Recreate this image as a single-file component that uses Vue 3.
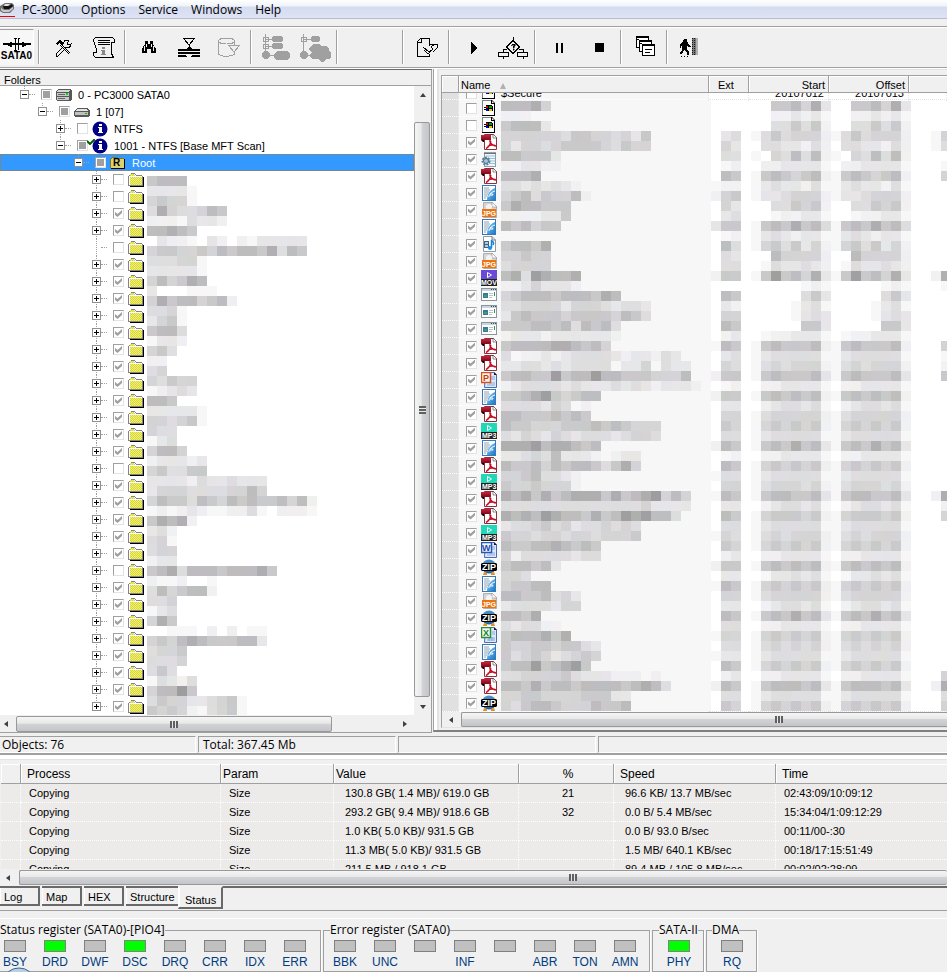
<script setup>
import { h } from 'vue'

const menu = ['PC-3000', 'Options', 'Service', 'Windows', 'Help']

const toolGroups = [
  ['tools', 'script'],
  ['find', 'merge', 'export'],
  ['map-tree', 'map-solid'],
  [],
  ['report'],
  ['play', 'flow'],
  ['pause', 'stop'],
  ['cascade'],
  ['exit'],
]
const toolNames = {
  tools: 'Settings', script: 'Script info', find: 'Find', merge: 'Filter', export: 'Save selection',
  'map-tree': 'Build map', 'map-solid': 'Build full map', report: 'Report', play: 'Start', flow: 'Algorithm',
  pause: 'Pause', stop: 'Stop', cascade: 'Cascade windows', exit: 'Exit',
}

const unchecked = [0, 1, 4, 17, 23]
const tree = [
  { depth: 0, open: true, state: 'mixed', icon: 'drive', text: '0 - PC3000 SATA0' },
  { depth: 1, open: true, state: 'mixed', icon: 'disk', text: '1 [07]' },
  { depth: 2, open: false, state: 'off', icon: 'info', text: 'NTFS', more: true },
  { depth: 2, open: true, state: 'mixed', icon: 'info', text: '1001 - NTFS [Base MFT Scan]', mark: true },
  { depth: 3, open: true, state: 'mixed', icon: 'root', text: 'Root', selected: true },
  ...Array.from({ length: 32 }, (_, i) => ({
    depth: 4, open: false, leaf: i === 4, state: unchecked.includes(i) ? 'off' : 'on',
    icon: 'folder', text: '', more: i < 31,
  })),
]

const fileIcons = ('win win pdf note pdf html jpg html media jpg mov app app app pdf pdf ppt html pdf mp3 html pdf ' +
  'mp3 pdf pdf mp3 word zip html jpg zip xls html pdf pdf zip').split(' ')

// Letters printed on top of a file-type picture: text, x, baseline, size, colour.
const iconLetters = {
  root: ['R', 3, 11, 10, '#000'],
  'f-jpg': ['JPG', 1, 14, 7, '#fff'],
  'f-mov': ['MOV', 0, 15, 7, '#fff'],
  'f-mp3': ['MP3', 1, 15, 7, '#fff'],
  'f-ppt': ['P', 2, 9, 9, '#c83c10'],
  'f-word': ['W', 1, 9, 9, '#1c48a8'],
  'f-xls': ['X', 2, 9, 9, '#18782c'],
  'f-zip': ['ZIP', 1, 11, 9, '#fff'],
}
const Icon = (props) => {
  const l = iconLetters[props.name]
  return h('svg', { width: 16, height: 16, viewBox: '0 0 16 16' }, [
    h('use', { href: '#' + props.name }),
    l && h('text', { x: l[1], y: l[2], 'font-size': l[3], fill: l[4], 'font-family': 'Liberation Sans', 'font-weight': 'bold' }, l[0]),
  ])
}
Icon.props = ['name']

const processes = [
  ['Copying', 'Size', '130.8 GB( 1.4 MB)/ 619.0 GB', '21', '96.6 KB/ 13.7 MB/sec', '02:43:09/10:09:12'],
  ['Copying', 'Size', '293.2 GB( 9.4 MB)/ 918.6 GB', '32', '0.0 B/ 5.4 MB/sec', '15:34:04/1:09:12:29'],
  ['Copying', 'Size', '1.0 KB( 5.0 KB)/ 931.5 GB', '', '0.0 B/ 93.0 B/sec', '00:11/00-:30'],
  ['Copying', 'Size', '11.3 MB( 5.0 KB)/ 931.5 GB', '', '1.5 MB/ 640.1 KB/sec', '00:18/17:15:51:49'],
  ['Copying', 'Size', '211.5 MB / 918.1 GB', '', '89.4 MB / 105.8 MB/sec', '00:02/02:28:09'],
]

const tabs = ['Log', 'Map', 'HEX', 'Structure', 'Status']

const registers = [
  { title: 'Status register (SATA0)-[PIO4]', cls: 'g-status', bits: ['BSY', 'DRD', 'DWF', 'DSC', 'DRQ', 'CRR', 'IDX', 'ERR'], on: ['DRD', 'DSC'] },
  { title: 'Error register (SATA0)', cls: 'g-error', bits: ['BBK', 'UNC', '', 'INF', '', 'ABR', 'TON', 'AMN'], on: [] },
  { title: 'SATA-II', cls: 'g-sata', bits: ['PHY'], on: ['PHY'] },
  { title: 'DMA', cls: 'g-dma', bits: ['RQ'], on: [] },
]

// Masked text is painted as 10px tiles; each digit is a darkness level.
const levels = [255, 247, 239, 229, 220, 211, 200, 188, 174, 157]
const treeMask = `6777
33331
56551
48544576
22214332
77876
0322103202133333
5665565767768476
444551
333331
575687
3000111
586775672
4451
3561
6774
1332
564
22
45
54655
12343
776
333331
554561
544
134
5775
233323
564466
333324334333
355544445575
57664765767667572
12123211224102221
68782
342
451
455
233
6784777677786
2112001
4756772
445
134
586
001110202011
565787666773
4556
4445
464
14324
57796
4655334561
6565214561`.split('\n')
const nameMask = `77785
2221
67773
555555466554536
535545666654655
776663
2233221
7778
443434321
567465572
68776661
22223361
767566
11
67768
55655
45555
78498778
223533321
567776777687
445555355543443
367666566665764
666776747674
233323333332
67777887675
4122323444432332431
3344343444413350433
6776696779776665557
23444434333434323332
6678965677
4444354121
776667676
7665556667676555
4354354344434554
8889788767
33454733321233
76675767764685
55674432
65565552
8786867888686789575
4444444444444453333
878798776867989774
34456453445454
65545545545556
7667787676
5244444344
677673
55411
56677
77667453
34444355
77681
434422
6777868
6556656643
6456534565
677967896
44555564333222121
77686776777767874
5566555566633
5467765557667`.split('\n')
const infoMask = `000 00667583 00
000 00223231 00
000 00446462 00
034 14645552 15
053 04433242 14
044 10547472 00
012 02233331 01
076 16765672 05
122 13433241 00
256 13345552 00
053 00446562 00
034 00122331 00
366 16768674 00
012 13432331 00
074 15646352 00
043 00755552 00
044 01433432 00
266 16967583 28
000 00000121 01
076 00000463 00
032 00001341 00
055 00001343 00
076 00000663 00
023 01223331 00
176 16766672 05
034 13444441 01
054 14545552 02
266 16766673 06
012 02233331 00
266 16767672 00
033 02344341 00
055 14555552 00
065 15656562 00
044 13444441 00
276 16768673 00
012 02233331 00
076 15656562 00
144 13444441 00
055 14555452 00
176 16776673 28
033 02344341 02
076 15666562 05
044 13444441 00
154 14545552 00
065 15656562 00
023 02233331 00
266 16767672 00
033 01334341 00
176 15656562 00
055 14555552 00
033 02344341 00
076 16768673 00
044 02233331 00
155 15656562 00
044 14545452 00
133 13444441 00
076 15656562 00
023 02233331 05
276 16777673 28
044 13444441 04
065 15656562 05`.split('\n').map((r) => {
  const [ext, time, tail] = r.split(' ')
  return ext + '0' + time + time + '00' + tail
})

function tiles(rows) {
  const out = []
  rows.forEach((row, y) => {
    for (let x = 0; x < row.length; x++) {
      const n = Number(row[x])
      if (!n) continue
      const v = levels[n]
      const tint = n > 1 ? 1 : 0
      const r = v + ((x * 7 + y * 5) % 4) * tint
      const g = v + ((x * 3 + y * 7) % 3) * tint
      const b = v + ((x * 5 + y * 11) % 6) * tint
      out.push(h('rect', { x: x * 10, y: y * 10, width: 10, height: 10, fill: `rgb(${r},${g},${b})` }))
    }
  })
  return out
}
const Mask = (props) =>
  h('svg', { width: props.cols * 10, height: props.rows.length * 10, 'shape-rendering': 'crispEdges', 'aria-hidden': 'true' }, tiles(props.rows))
Mask.props = ['rows', 'cols']
</script>

<template>
  <div class="app">
    <svg class="sprite" width="0" height="0" aria-hidden="true">
      <defs>
        <pattern id="dither" width="2" height="2" patternUnits="userSpaceOnUse">
          <rect width="2" height="2" fill="#ffff00" />
          <rect width="1" height="1" fill="#c8c8b0" /><rect x="1" y="1" width="1" height="1" fill="#c8c8b0" />
        </pattern>
        <linearGradient id="red" x1="0" y1="0" x2="0" y2="1"><stop offset="0" stop-color="#c8243c" /><stop offset="1" stop-color="#7c0818" /></linearGradient>
        <linearGradient id="blue" x1="0" y1="0" x2="1" y2="1"><stop offset="0" stop-color="#8cd0f8" /><stop offset="1" stop-color="#1878c8" /></linearGradient>
        <linearGradient id="globe" x1="0" y1="0" x2="0" y2="1"><stop offset="0" stop-color="#4c94cc" /><stop offset="1" stop-color="#2060a0" /></linearGradient>
      </defs>
      <symbol id="folder" viewBox="0 0 16 16">
        <g transform="translate(0 1)" shape-rendering="crispEdges">
          <path d="M2 13H15V4H16V14H2Z" fill="#000" />
          <path d="M1 3L2 1H6L7 3H14V12H1Z" fill="url(#dither)" />
          <path d="M0 3H1V12H0ZM1 2H2V3H1ZM2 1H3V0H7V1H8V2H14V3H8V2H7V1H2ZM14 3H15V12H14ZM0 12H15V13H0Z" fill="#848484" />
          <path d="M1 3H14V4H1ZM1 4H2V12H1Z" fill="#fff" />
        </g>
      </symbol>
      <symbol id="root" viewBox="0 0 16 16">
        <g transform="translate(0 1)" shape-rendering="crispEdges">
          <path d="M1 3L2 1H6L7 3H14V12H1Z" fill="#dcd070" /><path d="M14 3H15V13H1V12H14Z" fill="#000" />
          <path d="M0 3H1V12H0ZM1 2H2V3H1ZM2 1H7V2H14V3H7V2H2Z" fill="#807820" />
        </g>
      </symbol>
      <symbol id="drive" viewBox="0 0 16 16">
        <g transform="translate(0 2)" shape-rendering="crispEdges">
          <path d="M2 0H15L16 2V10L14 12H1L0 10V3Z" fill="#585858" /><path d="M2 1H14L13 3H1Z" fill="#d8d8d8" />
          <rect x="1" y="4" width="12" height="3" fill="#c8c8c8" /><rect x="1" y="8" width="12" height="3" fill="#c8c8c8" />
          <rect x="2" y="5" width="7" height="1" fill="#686868" /><rect x="2" y="9" width="7" height="1" fill="#686868" /><rect x="10" y="4" width="2" height="2" fill="#00e000" />
        </g>
      </symbol>
      <symbol id="disk" viewBox="0 0 16 16">
        <g transform="translate(0 3)" shape-rendering="crispEdges">
          <path d="M3 1H13L16 4V8L15 10H1L0 9V4Z" fill="#585858" /><path d="M3 2H12L14 4H1Z" fill="#e4e4e4" />
          <rect x="1" y="5" width="13" height="3" fill="#c0c0c0" /><rect x="11" y="6" width="2" height="1" fill="#00c000" />
        </g>
      </symbol>
      <symbol id="info" viewBox="0 0 16 16">
        <circle cx="8" cy="8" r="7.500" fill="#000084" /><path d="M7 3H10V5H7ZM6 6H10V11H11V12H6V11H7V7H6Z" fill="#fff" />
      </symbol>

      <symbol id="f-win" viewBox="0 0 16 16">
        <path d="M2 1H12V15H2Z" fill="#fff" /><path d="M1 0H11V1H2V15H1Z" fill="#808080" /><path d="M11 0L14 3V16H1V15H13V4H10V0Z" fill="#000" /><path d="M11 1L13 3H11Z" fill="#fff" />
        <path d="M3 7H5V8H3ZM3 9H5V10H3Z" fill="#000" /><rect x="5" y="6" width="3" height="2" fill="#e00000" /><rect x="8" y="6" width="3" height="2" fill="#00a000" />
        <rect x="5" y="9" width="3" height="2" fill="#0000e0" /><rect x="8" y="9" width="3" height="2" fill="#e0c000" /><path d="M5 5H11V6H5ZM11 6H12V11H11ZM5 8H11V9H5ZM7 6H8V11H7Z" fill="#000" />
      </symbol>
      <symbol id="f-pdf" viewBox="0 0 16 16">
        <path d="M3.500 .500H12.500L15.500 4V15.500H3.500Z" fill="#fff" stroke="#8c3040" /><path d="M12 0V4H16Z" fill="#fff" stroke="#404040" stroke-width=".6" />
        <path d="M0 5H3V8H2L0 6Z" fill="#000" /><rect x="0" y="1" width="10" height="5" fill="url(#red)" />
        <path d="M9 5C8.500 8 10 11 14.500 12M9.800 7C9.500 10 8 13 5 14.500M6.500 12.500C9 11 12 10.500 15 12" stroke="#c00c20" stroke-width="1.400" fill="none" />
      </symbol>
      <symbol id="f-note" viewBox="0 0 16 16">
        <rect x="3.500" y="2.500" width="11" height="13" fill="#f0f8fc" stroke="#8c9ca8" /><path d="M4 1V3M6 1V3M8 1V3M10 1V3M12 1V3M14 1V3" stroke="#404850" stroke-width="1" />
        <path d="M5 5H14M5 7.500H14M8 10H14M8 12.500H14" stroke="#98c0d8" /><circle cx="5" cy="10" r="3.500" fill="none" stroke="#5c8098" stroke-width="2" stroke-dasharray="2 1" /><circle cx="5" cy="10" r="2.500" fill="#a8c4d8" stroke="#486c88" />
      </symbol>
      <symbol id="f-html" viewBox="0 0 16 16">
        <rect x="1.500" y=".500" width="13" height="15" fill="#fff" stroke="#3878b8" /><path d="M3 3H8M3 5H9M3 7H8M3 9H7M3 11H6M3 13H5" stroke="#90a0b0" stroke-width="1" />
        <path d="M14 3C9 5 6 9 6 15H14Z" fill="url(#blue)" /><path d="M8 12C8 8 12 8 12 10H9M14 6C11 7 10 8 9 9" stroke="#fff" fill="none" stroke-width="1" />
      </symbol>
      <symbol id="f-jpg" viewBox="0 0 16 16">
        <path d="M2.500 .500H11L15.500 5V15.500H2.500Z" fill="#d4d4d4" stroke="#b0b0b0" /><path d="M11 0V5H16Z" fill="#f8f8f8" stroke="#888" stroke-width=".5" /><circle cx="8" cy="5" r="3" fill="#f4f4f4" />
        <rect x="1" y="7" width="14" height="8" fill="#ec7410" />
      </symbol>
      <symbol id="f-media" viewBox="0 0 16 16">
        <path d="M2.500 .500H11L14.500 4V15.500H2.500Z" fill="#fff" stroke="#9098a0" /><path d="M11 .500V4H14.500" fill="none" stroke="#707880" />
        <rect x="3" y="5" width="5" height="7" fill="#486078" /><path d="M4 6H7V8H4ZM4 9H7V11H4Z" fill="#a0d0f0" /><path d="M10.500 4V12M10.500 5C13 6 13 7 12 9" stroke="#1080d8" stroke-width="1.500" fill="none" /><circle cx="9" cy="12" r="2" fill="#1890e8" />
      </symbol>
      <symbol id="f-mov" viewBox="0 0 16 16">
        <rect width="16" height="10" fill="#6a48d8" /><path d="M6.500 2.500V7.500L10.500 5Z" fill="none" stroke="#fff" /><rect y="9" width="16" height="7" fill="#202020" />
      </symbol>
      <symbol id="f-mp3" viewBox="0 0 16 16">
        <rect width="16" height="10" fill="#20d8b8" /><path d="M6.500 2.500V7.500L10.500 5Z" fill="none" stroke="#fff" /><rect y="9" width="16" height="7" fill="#202020" />
      </symbol>
      <symbol id="f-app" viewBox="0 0 16 16">
        <rect x=".500" y="1.500" width="15" height="12" fill="#fff" stroke="#8c949c" /><rect x="1" y="2" width="14" height="2" fill="#c8d4e0" /><path d="M10 2H11V3H10ZM12 2H13V3H12ZM14 2H15V3H14Z" fill="#404850" />
        <rect x="2" y="6" width="5" height="5" fill="#387898" /><path d="M3 8H6V10H3Z" fill="#38a070" /><path d="M8 6.500H12M8 8.500H12M8 10.500H11" stroke="#b8c4c8" /><rect x="13" y="5" width="1" height="4" fill="#389060" />
      </symbol>
      <symbol id="f-ppt" viewBox="0 0 16 16">
        <path d="M4.500 .500H13L15.500 3V15.500H3.500Z" fill="#dce8fc" stroke="#486cb0" /><path d="M13 0V3H16Z" fill="#101830" /><path d="M10 5H14M10 7H14M8 11H14M6 13H14" stroke="#88a8e0" />
        <rect x=".500" y=".500" width="9" height="10" fill="#fff4ec" stroke="#d85020" stroke-width="1.500" />
      </symbol>
      <symbol id="f-word" viewBox="0 0 16 16">
        <path d="M4.500 .500H13L15.500 3V15.500H3.500Z" fill="#dce8fc" stroke="#486cb0" /><path d="M13 0V3H16Z" fill="#101830" /><path d="M11 5H14M11 7H14M8 11H14M6 13H14" stroke="#88a8e0" />
        <rect x=".500" y=".500" width="10" height="10" fill="#f4f8ff" stroke="#2858b0" stroke-width="1.500" />
      </symbol>
      <symbol id="f-xls" viewBox="0 0 16 16">
        <path d="M4.500 .500H13L15.500 3V15.500H3.500Z" fill="#dce8fc" stroke="#486cb0" /><path d="M13 0V3H16Z" fill="#101830" /><path d="M11 5H14M11 7H14M8 11H14M6 13H14M8 10V14M11 10V14" stroke="#88a8e0" />
        <rect x=".500" y=".500" width="9" height="10" fill="#f0fcf0" stroke="#288c38" stroke-width="1.500" />
      </symbol>
      <symbol id="f-zip" viewBox="0 0 16 16">
        <circle cx="8" cy="7.500" r="7" fill="url(#globe)" /><path d="M3 13L2 16H6V14ZM13 13L14 16H10V14Z" fill="#e09020" />
        <path d="M1 4H15L16 5V11L15 12H1L0 11V5Z" fill="#000" />
      </symbol>

      <symbol id="t-sata" viewBox="0 0 28 14">
        <path d="M0 7H28M8 5V10M6 6V9M20 5V10M22 6V9" stroke="#000" stroke-width="2" /><path d="M11 1H14M11 13H14M15 1H17M12.500 1V13M15.500 1V13" stroke="#000" stroke-width="1" fill="none" />
      </symbol>
      <symbol id="t-tools" viewBox="0 0 32 32">
        <path d="M9 11L13 8L17 11L15 13L12 11L11 14Z" fill="#000" /><path d="M13 13L22 22M14 12L23 21" stroke="#000" /><path d="M9 22L17 14M11 24L19 16M9 22V24H11" stroke="#000" fill="none" />
        <path d="M17 12C16 9 19 7 22 9L20 11L21 13L24 12C24 15 21 17 18 15" fill="#f0f0f0" stroke="#000" />
      </symbol>
      <symbol id="t-script" viewBox="0 0 32 32">
        <path d="M8.500 5.500H25.500L27.500 7.500V10.500H24.500V21.500L26.500 25.500H8.500L6.500 23.500V20.500H9.500C11 17 7 13 7 10C6 8 7 6 8.500 5.500Z" fill="#f0f0f0" stroke="#000" />
        <path d="M11 8.500H23M11 10.500H23M11 12.500H23" stroke="#000" /><path d="M15 15H18V17H15ZM14 18H18V22H19V23H14V22H15V19H14Z" fill="#888" />
      </symbol>
      <symbol id="t-find" viewBox="0 0 32 32">
        <path d="M12 9H15V12H17V9H20V12L23 17V21H18V17H14V21H9V17L12 12Z" fill="#000" /><path d="M11 14V19M13 12V15M20 14V19M18 12V15" stroke="#f0f0f0" stroke-width="1" />
      </symbol>
      <symbol id="t-merge" viewBox="0 0 32 32">
        <path d="M10.500 6.500H21.500L16 13Z" fill="#f0f0f0" stroke="#000" /><path d="M5 17H13L15 15H17L19 17H27V19H5ZM5 20H27V22H5ZM5 23H12L15 25H17L20 23H27V25H5Z" fill="#000" /><path d="M16 13V16" stroke="#000" />
      </symbol>
      <symbol id="t-export" viewBox="0 0 32 32">
        <path d="M5.500 9V22C8 25 18 25 21.500 22V19M21.500 9V13" fill="none" stroke="#a0a0a0" /><ellipse cx="13.500" cy="9" rx="8" ry="3" fill="#f0f0f0" stroke="#a0a0a0" /><path d="M15.500 13.500H26.500L21 20Z" fill="#f0f0f0" stroke="#a0a0a0" />
      </symbol>
      <symbol id="t-map-tree" viewBox="0 0 32 32">
        <g fill="#a0a0a0"><path d="M6 2H7V20H6ZM7 7H14V8H7ZM7 14H14V15H7ZM7 23H16V24H7Z" /><path d="M13 5L15 4H22L24 6V9L22 10H15L13 9ZM13 12L15 11H22L24 13V16L22 17H15L13 16ZM15 22L18 19H28L31 22V25L28 28H18L15 26Z" /><path d="M3 21L6 19H8L11 22V25L8 27H5L3 25Z" /></g>
        <path d="M4.500 5.500H9.500V9.500H4.500ZM4.500 12.500H9.500V16.500H4.500Z" fill="none" stroke="#a0a0a0" />
      </symbol>
      <symbol id="t-map-solid" viewBox="0 0 32 32">
        <g fill="#a0a0a0"><path d="M4 2H5V20H4ZM5 7H14V8H5ZM5 23H11V24H5Z" /><path d="M12 5L14 4H19L21 6V9L19 10H14L12 9Z" /><path d="M1 21L4 19H6L9 22V25L6 27H3L1 25Z" /><path d="M11 15L14 12H20L22 14H28L30 17V19L32 21V25L30 27H27L25 30H22L20 27H13L10 24L13 20L10 18Z" /></g>
        <path d="M2.500 5.500H7.500V9.500H2.500Z" fill="none" stroke="#a0a0a0" />
      </symbol>
      <symbol id="t-report" viewBox="0 0 32 32">
        <path d="M18.500 14V6.500H9.500L6.500 9.500V24.500H18.500V22" fill="#f0f0f0" stroke="#000" /><path d="M6 10H10V6" fill="none" stroke="#000" />
        <path d="M12 15L18 20L20 18M13 18L17 22L22 17L20 15L24 12H26V16L22 20" fill="none" stroke="#000" /><path d="M19 12H26" stroke="#000" />
      </symbol>
      <symbol id="t-play" viewBox="0 0 32 32"><path d="M14 10L20 16L14 22Z" fill="#000" /></symbol>
      <symbol id="t-flow" viewBox="0 0 32 32">
        <path d="M16 5V9M10 17H6V20M22 17H26V20M6 25V27M26 25V27" stroke="#000" fill="none" /><path d="M16 8.500L22.500 15L16 21.500L9.500 15Z" fill="#f0f0f0" stroke="#000" />
        <path d="M1.500 20.500H11.500V24.500H1.500ZM20.500 20.500H30.500V24.500H20.500Z" fill="#f0f0f0" stroke="#000" /><path d="M14 13H15V12H18V14H17V16H16V14H17V13ZM16 17H17V18H16Z" fill="#000" stroke="#000" stroke-width=".5" />
      </symbol>
      <symbol id="t-pause" viewBox="0 0 32 32"><path d="M13 11H15V21H13ZM18 11H20V21H18Z" fill="#000" /></symbol>
      <symbol id="t-stop" viewBox="0 0 32 32"><rect x="12" y="11" width="9" height="9" fill="#000" /></symbol>
      <symbol id="t-cascade" viewBox="0 0 32 32">
        <g stroke="#000" fill="#fff"><rect x="7.500" y="4.500" width="12" height="11" /><rect x="10.500" y="8.500" width="12" height="11" /><rect x="13.500" y="12.500" width="12" height="11" /></g>
        <path d="M7 5H20M10 9H23M13 13H26" stroke="#000" stroke-width="2" /><path d="M16 17.500H23M16 20.500H21M8 7.500H10M11 11.500H13" stroke="#000" />
      </symbol>
      <symbol id="t-exit" viewBox="0 0 32 32">
        <rect x="17" y="6" width="6" height="17" fill="#787878" /><path d="M17 6V23M19 6V23" stroke="#181818" stroke-dasharray="1 1" /><rect x="21" y="6" width="2" height="17" fill="#b0b0b0" />
        <path d="M9 7H12V10H13L14 13L16 14V15H13L12 14V17L14 20V23H12V20L9 18L7 22H5V20L7 18V14H6V16H5V12L8 10Z" fill="#000" /><path d="M6 24.500H15" stroke="#000" stroke-dasharray="1 2" />
      </symbol>
      <symbol id="t-logo" viewBox="0 0 15 16">
        <path d="M0 5L5 2H12L14 4V8L10 12H3L0 10Z" fill="#707070" /><path d="M3 5H9L12 3L13 5L9 8H4Z" fill="#101010" /><path d="M1 7L4 9H9L13 6V8L9 11H3L1 9Z" fill="#c8c8c8" /><path d="M5 3H10L8 5H4Z" fill="#e0e0e0" /><rect y="15" width="15" height="1" fill="#f00000" />
      </symbol>
    </svg>

    <nav class="menubar">
      <svg class="logo" width="15" height="16"><use href="#t-logo" /></svg>
      <button v-for="m in menu" :key="m" type="button">{{ m }}</button>
    </nav>

    <div class="toolbar">
      <button class="sata" type="button">
        <svg width="28" height="14" shape-rendering="crispEdges"><use href="#t-sata" /></svg>
        <span>SATA0</span>
      </button>
      <div v-for="(g, i) in toolGroups" :key="i" class="group" :class="{ spacer: !g.length }">
        <button v-for="t in g" :key="t" type="button" :aria-label="toolNames[t]">
          <svg width="32" height="32" shape-rendering="crispEdges"><use :href="'#t-' + t" /></svg>
        </button>
      </div>
    </div>

    <main class="panes">
      <section class="left">
        <h2>Folders</h2>
        <div class="treewrap">
          <div class="tree">
            <div v-for="(n, i) in tree" :key="i" class="node" :class="{ selected: n.selected }" :style="{ paddingLeft: 20 + n.depth * 18 + 'px' }">
              <span class="exp" :class="{ more: n.more }"><i v-if="!n.leaf" :class="{ plus: !n.open }"></i></span>
              <span class="dash"></span>
              <input type="checkbox" :class="n.state" :checked="n.state === 'on'" :aria-label="n.text || 'Folder ' + (i - 4)" />
              <svg v-if="n.mark" class="mark" width="8" height="6"><path d="M0 2L3 5L8 0" fill="none" stroke="#006000" stroke-width="2" /></svg>
              <Icon class="ico" :name="n.icon" />
              <span class="label">{{ n.text }}</span>
            </div>
            <Mask class="mask-tree" :rows="treeMask" :cols="17" />
          </div>
          <div class="vscroll">
            <button type="button" aria-label="Scroll up"><i class="up"></i></button>
            <div class="thumb"><i class="grip"></i></div>
            <button type="button" aria-label="Scroll down"><i class="down"></i></button>
          </div>
        </div>
        <div class="hscroll left-scroll">
          <button type="button" aria-label="Scroll left"><i class="lt"></i></button>
          <div class="thumb"><i class="grip"></i></div>
          <button type="button" aria-label="Scroll right"><i class="rt"></i></button>
        </div>
      </section>

      <section class="right">
        <div class="files">
          <table>
            <colgroup><col class="c0" /><col class="c1" /><col class="c2" /><col class="c3" /><col class="c3" /><col /></colgroup>
            <thead>
              <tr><th></th><th>Name <i class="sort"></i></th><th class="ext">Ext</th><th class="num">Start</th><th class="num">Offset</th><th></th></tr>
            </thead>
            <tbody>
              <tr class="cut">
                <td></td>
                <td><div class="file"><input type="checkbox" class="off" aria-label="$Secure" /><Icon name="f-win" /><span>$Secure</span></div></td>
                <td></td><td class="num"><div>20107012</div></td><td class="num"><div>20107013</div></td><td></td>
              </tr>
              <tr v-for="(f, i) in fileIcons" :key="i">
                <td></td>
                <td><div class="file"><input type="checkbox" :class="i < 2 ? 'off' : 'on'" :checked="i > 1" :aria-label="'File ' + (i + 1)" /><Icon :name="'f-' + f" /></div></td>
                <td></td><td></td><td></td><td></td>
              </tr>
            </tbody>
          </table>
          <div class="mask-name"><Mask :rows="nameMask" :cols="21" /></div>
          <div class="mask-info"><Mask :rows="infoMask" :cols="24" /></div>
          <div class="hscroll file-scroll">
            <button type="button" aria-label="Scroll left"><i class="lt"></i></button>
            <div class="thumb"><i class="grip"></i></div>
          </div>
        </div>
      </section>
    </main>

    <div class="statusbar">
      <span>Objects: 76</span><span>Total: 367.45 Mb</span><span></span><span></span>
    </div>

    <section class="process">
      <table>
        <colgroup><col class="p0" /><col class="p1" /><col class="p2" /><col class="p3" /><col class="p4" /><col class="p5" /><col /></colgroup>
        <thead>
          <tr><th></th><th>Process</th><th>Param</th><th>Value</th><th>%</th><th>Speed</th><th>Time</th></tr>
        </thead>
        <tbody>
          <tr v-for="(p, i) in processes" :key="i" :class="{ cut: i === 4 }">
            <td></td><td v-for="(c, j) in p" :key="j"><div>{{ c }}</div></td>
          </tr>
        </tbody>
      </table>
      <div class="hscroll proc-scroll">
        <button type="button" aria-label="Scroll left"><i class="lt"></i></button>
        <div class="thumb"><i class="grip"></i></div>
      </div>
    </section>

    <div class="tabs">
      <button v-for="t in tabs" :key="t" type="button" :class="['tab-' + t.toLowerCase(), { active: t === 'Status' }]">{{ t }}</button>
      <span class="rest"></span>
    </div>

    <footer class="registers">
      <fieldset v-for="g in registers" :key="g.title" :class="g.cls">
        <legend>{{ g.title }}</legend>
        <div class="bits">
          <div v-for="(b, i) in g.bits" :key="i" class="bit"><i :class="{ lit: g.on.includes(b) }"></i><span>{{ b }}</span></div>
        </div>
      </fieldset>
      <svg class="orb" width="26" height="5"><ellipse cx="13" cy="12" rx="14" ry="11" fill="#b8d0e4" stroke="#406488" /></svg>
    </footer>
  </div>
</template>

<style>
body { margin: 0; background: #f0f0f0; }
</style>

<style scoped>
.app { position: relative; min-height: 100vh; overflow: hidden; background: #f0f0f0; color: #000; font-family: "Liberation Sans", Arial, sans-serif; font-size: 11px; }
.app * { box-sizing: border-box; }
.sprite { position: absolute; }
button { margin: 0; padding: 0; border: 0; background: none; font: inherit; color: inherit; }
i { display: block; font-style: normal; }

.menubar { display: flex; align-items: center; gap: 13px; height: 19px; border-bottom: 1px solid #b6bcd2; background: linear-gradient(#fff 0, #f0f3fa 6px, #d5dcf0 7px, #dde3f4 18px); font-family: "Open Sans", "Noto Sans", sans-serif; font-size: 12px; line-height: 18px; }
.menubar button { padding-top: 2px; }
.logo { margin-right: -6px; }

.toolbar { display: flex; height: 42px; margin-top: 7px; border-top: 1px solid #a0a0a0; border-bottom: 1px solid #a0a0a0; box-shadow: inset 0 1px #fff, 0 1px #fff; }
.sata { display: flex; flex-direction: column; align-items: center; justify-content: center; width: 34px; margin: 2px 4px 2px 0; padding-top: 2px; border-top: 1px solid #a0a0a0; border-right: 1px solid #fff; background: #f7f7f7; }
.sata span { font-weight: bold; font-size: 10px; line-height: 10px; }
.group { display: flex; align-items: center; padding-right: 2px; }
.group::before { content: ""; align-self: stretch; width: 1px; margin: 3px 3px 3px 0; background: #a0a0a0; box-shadow: 1px 0 #fff; }
.group button { display: flex; align-items: center; justify-content: center; width: 40px; height: 40px; padding: 2px 0 0 1px; }
.spacer { width: 66px; }

.panes { display: flex; margin-top: 1px; height: 664px; }
.left { display: flex; flex-direction: column; flex: 0 0 432px; border-top: 1px solid #696969; border-right: 1px solid #a0a0a0; border-bottom: 1px solid #a0a0a0; }
.left h2 { margin: 0; height: 16px; padding: 2px 4px 0; border-bottom: 1px solid #a0a0a0; font-size: 11px; font-weight: normal; line-height: 16px; }
.treewrap { display: flex; background: #fff; }
.tree { position: relative; flex: 1; min-width: 0; overflow: hidden; }
.node { display: flex; align-items: center; height: 17px; white-space: nowrap; }
.node.selected { background: #3399ff; color: #fff; outline: 1px dotted #b07830; outline-offset: -1px; }
.exp { position: relative; display: flex; align-items: center; width: 9px; height: 17px; }
.exp::before { content: ""; position: absolute; left: 4px; top: 0; height: 9px; border-left: 1px dotted #a0a0a0; }
.exp.more::before { height: 17px; }
.exp i { position: relative; width: 9px; height: 9px; border: 1px solid #909090; background: linear-gradient(#000, #000) center / 5px 1px no-repeat #fff; }
.exp i.plus { background: linear-gradient(#000, #000) center / 5px 1px no-repeat, linear-gradient(#000, #000) center / 1px 5px no-repeat #fff; }
.dash { width: 6px; height: 1px; margin-right: 6px; border-top: 1px dotted #a0a0a0; }
input[type="checkbox"] { appearance: none; position: relative; flex: none; width: 11px; height: 11px; margin: 0; border: 1px solid #a0a0a0; border-right-color: #e3e3e3; border-bottom-color: #e3e3e3; background: #fff; }
input.mixed::before { content: ""; position: absolute; left: 1px; top: 1px; width: 7px; height: 7px; background: #a0a0a0; }
input.on::before { content: ""; position: absolute; left: 1px; top: 1px; width: 7px; height: 7px; background: #a0a0a0; clip-path: polygon(0 28%, 0 72%, 36% 100%, 100% 42%, 100% 0, 36% 57%); }
.ico { flex: none; margin: 0 6px 0 4px; }
.mark { margin: -8px -7px 0 -1px; position: relative; }
.label { line-height: 16px; }
.mask-tree { position: absolute; left: 147px; top: 90px; }

.vscroll { display: flex; flex-direction: column; flex: 0 0 17px; background: #f0f0f0; }
.vscroll button { display: flex; align-items: center; justify-content: center; height: 17px; }
.vscroll .thumb { flex: 1; display: flex; align-items: center; justify-content: center; margin: 19px 1px 1px 0; border: 1px solid #989898; border-radius: 2px; background: linear-gradient(90deg, #f5f5f5, #e8e8e8 45%, #d2d3d6 50%, #c4c5c8); }
.hscroll { display: flex; height: 16px; background: #f0f0f0; }
.hscroll button { display: flex; align-items: center; justify-content: center; flex: none; width: 16px; padding-right: 4px; }
.hscroll .thumb { flex: 1; display: flex; align-items: center; justify-content: center; border: 1px solid #989898; border-radius: 2px; background: linear-gradient(#f5f5f5, #e8e8e8 45%, #d2d3d6 50%, #c4c5c8); }
.vscroll .grip { width: 7px; height: 8px; background: repeating-linear-gradient(#606060 0 2px, #e8e8e8 2px 3px); }
.hscroll .grip { width: 8px; height: 7px; background: repeating-linear-gradient(90deg, #606060 0 2px, #e8e8e8 2px 3px); }
.left-scroll { margin-top: 1px; }
.left-scroll .thumb { flex: 0 0 316px; margin-right: 67px; }
.up, .down { border: 3px solid transparent; }
.up { border-bottom: 4px solid #404040; border-top: 0; }
.down { border-top: 4px solid #404040; border-bottom: 0; }
.lt, .rt { border: 3px solid transparent; }
.lt { border-right: 4px solid #404040; border-left: 0; }
.rt { border-left: 4px solid #404040; border-right: 0; }

.right { flex: 1; min-width: 0; margin: 0 0 1px 1px; padding: 6px 0 1px 7px; border-left: 1px solid #a0a0a0; border-bottom: 2px solid #808080; box-shadow: inset 3px 0 #fff, inset 5px 1px #e3e3e3; }
.files { position: relative; overflow: hidden; border: 1px solid #a0a0a0; border-right: 0; border-bottom-color: #e3e3e3; }
table { width: 100%; table-layout: fixed; border-collapse: separate; border-spacing: 0; }
th { padding: 0; text-align: left; font-weight: normal; white-space: nowrap; background: #f0f0f0; }
td { padding: 0; }
.c0 { width: 17px; } .c1 { width: 250px; } .c2 { width: 40px; } .c3 { width: 80px; }
.files th { height: 17px; padding: 2px 3px 0 2px; border-right: 1px solid #a0a0a0; border-bottom: 1px solid #a0a0a0; box-shadow: inset 1px 1px #fff; line-height: 14px; }
.files th:last-child { border-right: 0; }
.files th.ext { padding-left: 9px; }
.num { text-align: right; }
.sort { display: inline-block; margin-left: 7px; border: 3px solid transparent; border-bottom: 6px solid #b0b0b0; border-top: 0; }
.files td { height: 17px; background: #fff; border-right: 1px dotted #e4e4e4; border-bottom: 1px dotted #e4e4e4; }
.files td:first-child { background: #e0e0e0; border-color: #fff; border-right-color: #f0f0f0; }
.files td:nth-child(2) { background: #f7f7f7; border-bottom-color: #fff; }
.file { display: flex; align-items: center; height: 16px; padding-left: 7px; }
.file svg { margin: 0 4px; }
.files .cut td { height: 7px; line-height: 6px; }
.files .cut .file, .files .cut .num div { display: flex; align-items: flex-end; height: 6px; overflow: hidden; line-height: 12px; }
.files .cut .num div { justify-content: flex-end; padding-right: 4px; }
.mask-name { position: absolute; left: 59px; top: 25px; width: 210px; height: 610px; background: #f7f7f7; overflow: hidden; }
.mask-info { position: absolute; left: 269px; right: 0; top: 25px; height: 610px; background: #fff; overflow: hidden; }
.file-scroll { height: 15px; padding-left: 3px; }
.file-scroll .thumb { border-right: 0; border-radius: 2px 0 0 2px; }
.file-scroll .grip { margin-left: 148px; }

.statusbar { display: flex; gap: 2px; height: 24px; margin-top: 3px; padding-bottom: 5px; border-bottom: 1px solid #e3e3e3; background: linear-gradient(#f0f0f0 17px, #a0a0a0 17px, #a0a0a0 19px, #fff 19px); font-family: "Open Sans", "Noto Sans", sans-serif; font-size: 12px; line-height: 16px; }
.statusbar span { flex: 0 0 198px; height: 17px; padding-left: 4px; border: 1px solid #a0a0a0; border-right-color: #fff; border-bottom-color: #fff; background: #f0f0f0; }
.statusbar span:first-child { flex-basis: 196px; border-left: 0; padding-left: 2px; }
.statusbar span:last-child { flex: 1; border-right: 0; }

.process { margin-top: 4px; padding-left: 1px; }
.p0 { width: 20px; } .p1 { width: 200px; } .p2 { width: 113px; } .p3 { width: 185px; } .p4 { width: 95px; } .p5 { width: 162px; }
.process th { height: 20px; padding: 2px 0 0 6px; border-right: 1px solid #a0a0a0; border-bottom: 1px solid #a0a0a0; box-shadow: inset 1px 1px #fff; font-size: 12px; line-height: 17px; }
.process th:nth-child(3), .process th:nth-child(4) { padding-left: 2px; }
.process th:nth-child(5), .process td:nth-child(5) { padding-left: 4px; text-align: center; }
.process th:last-child, .process td:last-child { border-right: 0; }
.process td { height: 19px; padding-left: 8px; border-right: 1px dotted #fff; border-bottom: 1px dotted #fff; background: #edebea; line-height: 18px; white-space: nowrap; }
.process td:nth-child(4), .process td:nth-child(6) { padding-left: 11px; }
.process .cut td { height: 9px; border-bottom: 0; }
.process .cut div { height: 9px; overflow: hidden; }
.proc-scroll { margin-top: 1px; height: 15px; }
.proc-scroll button { width: 18px; }
.proc-scroll .thumb { border-right: 0; }
.proc-scroll .grip { margin-left: 178px; }

.tabs { display: flex; align-items: flex-start; height: 25px; margin-top: 1px; border-bottom: 1px solid #a0a0a0; }
.tabs button { width: 40px; height: 20px; margin-right: 2px; padding: 2px 0 0 4px; text-align: left; border: solid #696969; border-width: 2px 2px 2px 0; line-height: 14px; box-shadow: inset 1px 0 #fff; }
.tabs .tab-structure { width: 52px; margin-right: 0; border-right: 0; }
.tabs .active { width: 45px; height: 23px; margin-right: 0; border-top-color: #f0f0f0; padding: 4px 0 0 6px; border-left: 1px solid #fff; }
.rest { flex: 1; border-top: 2px solid #696969; }

.registers { position: relative; display: flex; gap: 2px; margin-top: 7px; padding-top: 4px; border-top: 1px solid #fff; font-family: "Open Sans", "Noto Sans", sans-serif; font-size: 12px; }
fieldset { min-width: 0; margin: 0; padding: 3px 0 2px; border: 1px solid #a0a0a0; box-shadow: 1px 1px #fff; }
legend { padding: 0; line-height: 14px; white-space: nowrap; }
.bits { display: flex; gap: 18px; }
.bit { display: flex; flex-direction: column; align-items: center; width: 22px; }
.bit i { width: 22px; height: 12px; border: 1px solid #808080; background: #c0c0c0; }
.bit i.lit { background: #00ff00; }
.bit span { height: 14px; margin-top: 3px; font-family: "Liberation Sans", Arial, sans-serif; font-size: 12px; line-height: 15px; color: #003c80; }
.g-status { width: 321px; padding-left: 4px; border-left: 0; }
.g-status legend { margin-left: -4px; }
.g-error { width: 327px; padding-left: 10px; }
.g-error legend { margin-left: -4px; }
.g-sata { width: 52px; padding-left: 15px; }
.g-sata legend { margin-left: -9px; }
.g-dma { width: 51px; padding-left: 14px; }
.g-dma legend { margin-left: -9px; }
.orb { position: absolute; left: 6px; bottom: 0; }
</style>
